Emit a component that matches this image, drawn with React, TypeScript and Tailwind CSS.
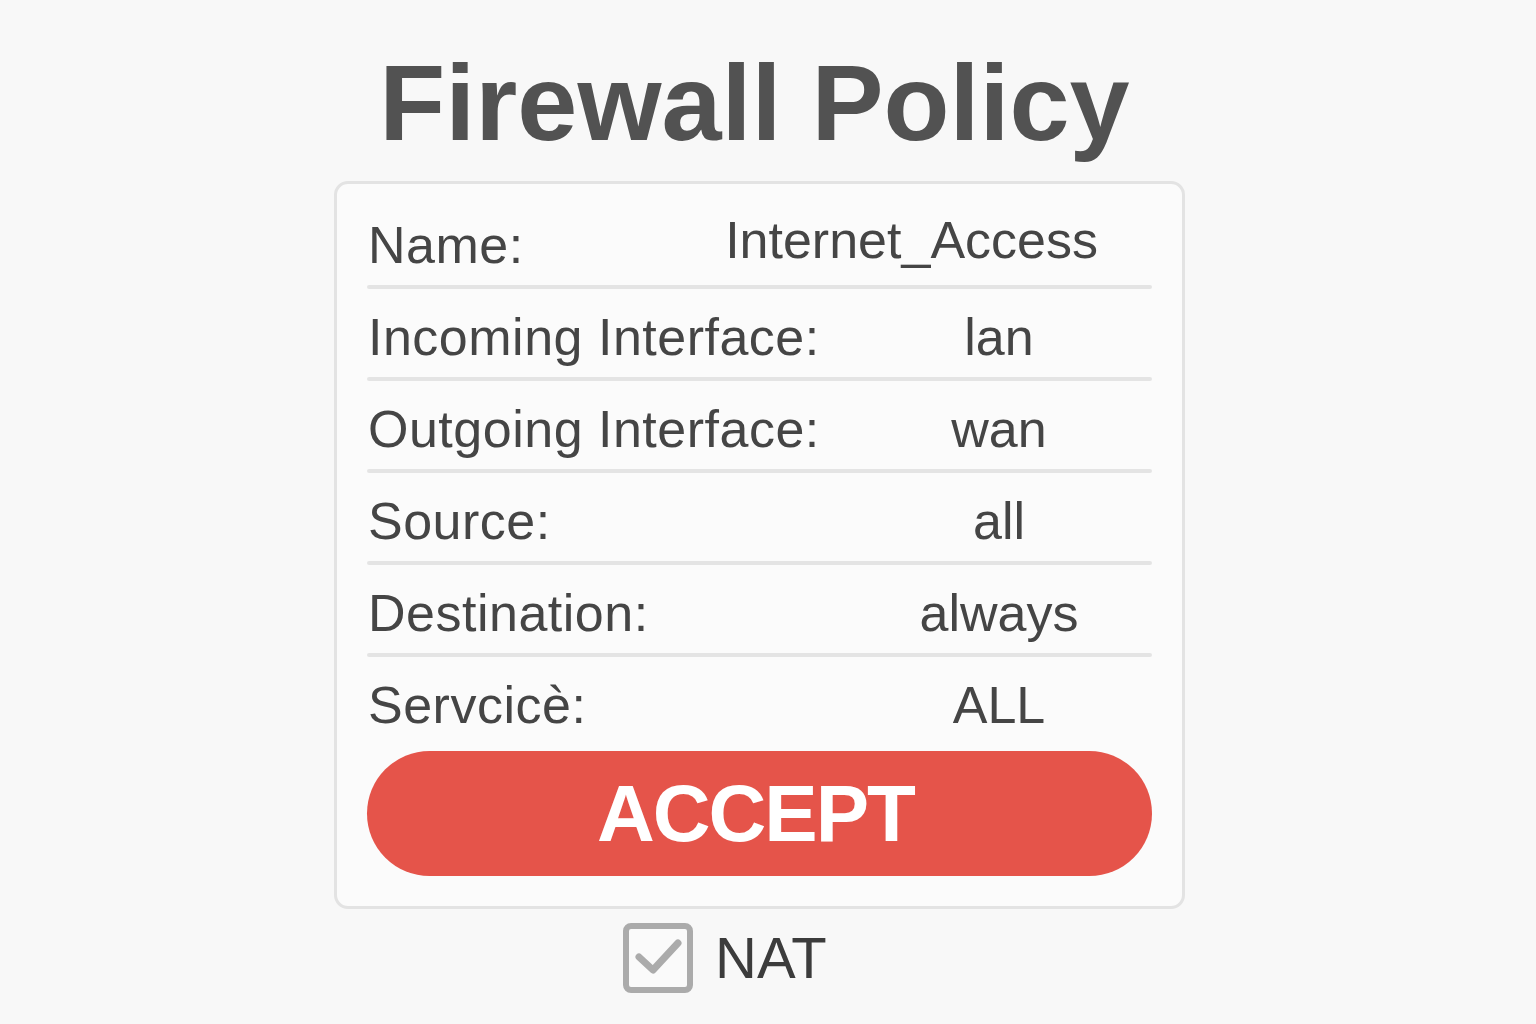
import React from 'react';

interface PolicyRow {
  label: string;
  value: string;
}

const rows: PolicyRow[] = [
  { label: 'Incoming Interface:', value: 'lan' },
  { label: 'Outgoing Interface:', value: 'wan' },
  { label: 'Source:', value: 'all' },
  { label: 'Destination:', value: 'always' },
];

const font = { fontFamily: '"Liberation Sans", Arial, sans-serif' };

const Divider: React.FC = () => <div className="h-[4px] bg-[#e4e4e4] mt-[14px] mb-[22px] rounded-full" />;

const App: React.FC = () => {
  return (
    <div className="min-h-screen w-full bg-[#f8f8f8] flex flex-col items-center pr-[17px] text-[#454545]" style={font}>
      <h1 className="mt-[49px] mr-[10px] text-[108px] leading-none font-bold text-[#525252]">Firewall Policy</h1>

      <div className="mt-[24px] w-[851px] rounded-[14px] border-[3px] border-[#e3e3e3] bg-[#fbfbfb] pt-[35px] px-[30px] pb-[30px]">
        <div className="flex items-start text-[52px] leading-none">
          <span className="flex-1 pl-[1px] tracking-[0.5px]">Name:</span>
          <span className="-mt-[5px] mr-[54px]">Internet_Access</span>
        </div>
        <Divider />

        {rows.map(row => (
          <div key={row.label}>
            <div className="flex items-start text-[52px] leading-none">
              <span className="flex-1 pl-[1px] tracking-[0.5px]">{row.label}</span>
              <span className="w-[306px] text-center">{row.value}</span>
            </div>
            <Divider />
          </div>
        ))}

        <div className="flex items-start text-[52px] leading-none">
          <span className="flex-1 pl-[1px] tracking-[0.5px]">Servcicè:</span>
          <span className="w-[306px] text-center">ALL</span>
        </div>

        <button className="mt-[20px] w-full h-[125px] rounded-full bg-[#e5544a] flex items-center justify-center text-white text-[80px] font-bold leading-none tracking-[-2px] pr-[8px]">
          ACCEPT
        </button>
      </div>

      <div className="w-[851px] mt-[14px] pl-[289px] flex items-center gap-[22px]">
        <div className="w-[70px] h-[70px] rounded-[8px] border-[6px] border-[#ababab] bg-[#fafafa]">
          <svg viewBox="0 0 58 58" className="w-[58px] h-[58px]" fill="none" stroke="#ababab" strokeWidth="7" strokeLinecap="round" strokeLinejoin="round">
            <path d="M10 28 L24 41 L49 14" />
          </svg>
        </div>
        <span className="text-[58px] leading-none text-[#3c3c3c]">NAT</span>
      </div>
    </div>
  );
};

export default App;
